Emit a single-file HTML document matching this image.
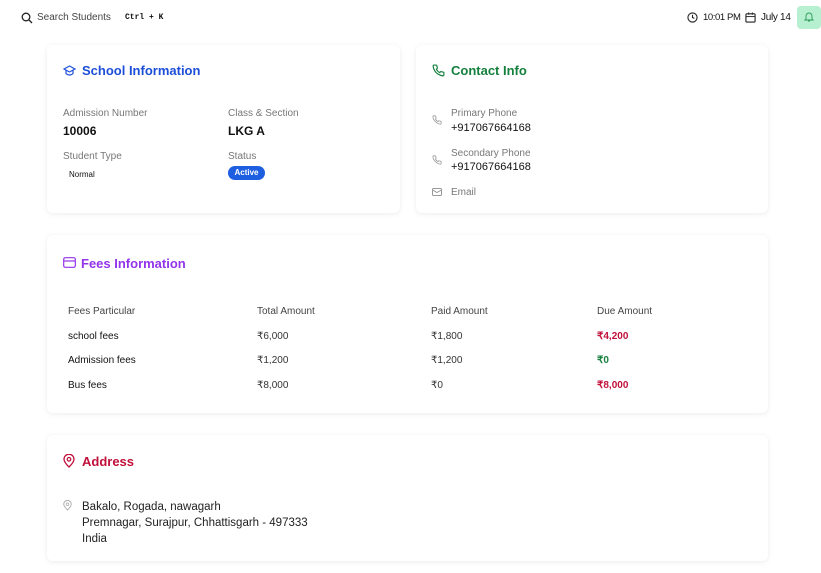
<!DOCTYPE html>
<html><head><style>
*{margin:0;padding:0;box-sizing:border-box}
body{width:821px;height:573px;background:#fff;font-family:"Liberation Sans",sans-serif;position:relative;overflow:hidden;color:#111}
.a{position:absolute;white-space:nowrap}
.card{position:absolute;background:#fff;border-radius:6px;box-shadow:0 1px 6px rgba(0,0,0,0.08)}
.t{font-size:13px;font-weight:bold}
.l{font-size:10px;color:#777}
.v{font-size:12px;color:#111}
.s{font-size:10px;color:#111}
svg{position:absolute}
</style></head><body>
<svg style="left:21px;top:12px" width="12" height="12" viewBox="0 0 12 12"><circle cx="5" cy="5" r="3.8" fill="none" stroke="#222" stroke-width="1.3"/><line x1="8" y1="8" x2="11" y2="11" stroke="#222" stroke-width="1.3"/></svg>
<div class="a" style="left:37px;top:12px;font-size:10px;color:#444">Search Students</div>
<div class="a" style="left:125px;top:13px;font-size:8px;font-family:'Liberation Mono',monospace;font-weight:bold">Ctrl + K</div>
<svg style="left:687px;top:12px" width="11" height="11" viewBox="0 0 12 12"><circle cx="6" cy="6" r="5" fill="none" stroke="#222" stroke-width="1.2"/><path d="M6 3v3l2 1" fill="none" stroke="#222" stroke-width="1.2"/></svg>
<div class="a" style="left:703px;top:12px;font-size:9.5px;letter-spacing:-0.4px">10:01 PM</div>
<svg style="left:745px;top:12px" width="11" height="11" viewBox="0 0 12 12"><rect x="1" y="2" width="10" height="9" rx="1" fill="none" stroke="#222" stroke-width="1.2"/><line x1="1" y1="5" x2="11" y2="5" stroke="#222"/><line x1="4" y1="0.5" x2="4" y2="3" stroke="#222"/><line x1="8" y1="0.5" x2="8" y2="3" stroke="#222"/></svg>
<div class="a" style="left:761px;top:12px;font-size:10px;letter-spacing:-0.3px;color:#111">July 14</div>
<div class="a" style="left:797px;top:6px;width:24px;height:23px;background:#b7f0d0;border-radius:4px"></div>
<svg style="left:804px;top:12px" width="10" height="10" viewBox="0 0 10 10"><path d="M2 7V4a3 3 0 0 1 6 0v3l1 1H1z M4 9h2" fill="none" stroke="#2a9a5a" stroke-width="0.9"/></svg>

<div class="card" style="left:47px;top:45px;width:353px;height:168px"></div>
<div class="card" style="left:416px;top:45px;width:352px;height:168px"></div>
<div class="card" style="left:47px;top:235px;width:721px;height:178px"></div>
<div class="card" style="left:47px;top:435px;width:721px;height:126px"></div>

<svg style="left:63px;top:65px" width="13" height="11" viewBox="0 0 13 11"><path d="M6.5 1L12 4 6.5 7 1 4z M3 5.5v3c2 2 5 2 7 0v-3" fill="none" stroke="#1d4ed8" stroke-width="1.2"/></svg>
<div class="a t" style="left:82px;top:63px;color:#1d4ed8">School Information</div>
<div class="a l" style="left:63px;top:108px">Admission Number</div>
<div class="a v" style="left:63px;top:124px;font-weight:bold">10006</div>
<div class="a l" style="left:228px;top:108px">Class &amp; Section</div>
<div class="a v" style="left:228px;top:124px;font-weight:bold">LKG A</div>
<div class="a l" style="left:63px;top:151px">Student Type</div>
<div class="a" style="left:69px;top:170px;font-size:8px">Normal</div>
<div class="a l" style="left:228px;top:151px">Status</div>
<div class="a" style="left:228px;top:166px;width:37px;height:14px;background:#1d5fe0;border-radius:7px;color:#fff;font-size:8px;font-weight:bold;text-align:center;line-height:14px">Active</div>

<svg style="left:432px;top:64px" width="13" height="13" viewBox="0 0 24 24"><path d="M22 16.9v3a2 2 0 0 1-2.2 2 19.8 19.8 0 0 1-8.6-3.1 19.5 19.5 0 0 1-6-6A19.8 19.8 0 0 1 2.1 4.2 2 2 0 0 1 4.1 2h3a2 2 0 0 1 2 1.7c.1 1 .4 1.900.7 2.8a2 2 0 0 1-.5 2.1L8.1 9.9a16 16 0 0 0 6 6l1.3-1.3a2 2 0 0 1 2.1-.4c.9.3 1.8.6 2.8.7a2 2 0 0 1 1.7 2z" fill="none" stroke="#15803d" stroke-width="2.2"/></svg>
<div class="a t" style="left:451px;top:63px;color:#15803d">Contact Info</div>
<svg style="left:432px;top:115px" width="10" height="10" viewBox="0 0 24 24"><path d="M22 16.9v3a2 2 0 0 1-2.2 2 19.8 19.8 0 0 1-8.6-3.1 19.5 19.5 0 0 1-6-6A19.8 19.8 0 0 1 2.1 4.2 2 2 0 0 1 4.1 2h3a2 2 0 0 1 2 1.7c.1 1 .4 1.9.7 2.8a2 2 0 0 1-.5 2.1L8.1 9.9a16 16 0 0 0 6 6l1.3-1.3a2 2 0 0 1 2.1-.4c.9.3 1.8.6 2.8.7a2 2 0 0 1 1.7 2z" fill="none" stroke="#999" stroke-width="2"/></svg>
<div class="a l" style="left:451px;top:108px">Primary Phone</div>
<div class="a v" style="left:451px;top:122px;font-size:11px">+917067664168</div>
<svg style="left:432px;top:155px" width="10" height="10" viewBox="0 0 24 24"><path d="M22 16.9v3a2 2 0 0 1-2.2 2 19.8 19.8 0 0 1-8.6-3.1 19.5 19.5 0 0 1-6-6A19.8 19.8 0 0 1 2.1 4.2 2 2 0 0 1 4.1 2h3a2 2 0 0 1 2 1.7c.1 1 .4 1.9.7 2.8a2 2 0 0 1-.5 2.1L8.1 9.9a16 16 0 0 0 6 6l1.3-1.3a2 2 0 0 1 2.1-.4c.9.3 1.8.6 2.8.7a2 2 0 0 1 1.7 2z" fill="none" stroke="#999" stroke-width="2"/></svg>
<div class="a l" style="left:451px;top:148px">Secondary Phone</div>
<div class="a v" style="left:451px;top:161px;font-size:11px">+917067664168</div>
<svg style="left:432px;top:188px" width="10" height="8" viewBox="0 0 10 8"><rect x="0.5" y="0.5" width="9" height="7" rx="1" fill="none" stroke="#999"/><path d="M0.5 2l4.5 2.5L9.5 2" fill="none" stroke="#999"/></svg>
<div class="a l" style="left:451px;top:187px">Email</div>

<svg style="left:63px;top:257px" width="13" height="11" viewBox="0 0 13 11"><rect x="0.7" y="0.7" width="11.6" height="9.6" rx="1.5" fill="none" stroke="#9333ea" stroke-width="1.2"/><line x1="0.7" y1="4" x2="12.3" y2="4" stroke="#9333ea" stroke-width="1.2"/></svg>
<div class="a t" style="left:81px;top:256px;color:#9333ea">Fees Information</div>
<div class="a l" style="left:68px;top:306px;color:#444">Fees Particular</div>
<div class="a l" style="left:257px;top:306px;color:#444">Total Amount</div>
<div class="a l" style="left:431px;top:306px;color:#444">Paid Amount</div>
<div class="a l" style="left:597px;top:306px;color:#444">Due Amount</div>
<div class="a s" style="left:68px;top:331px">school fees</div>
<div class="a s" style="left:257px;top:331px;color:#333">₹6,000</div>
<div class="a s" style="left:431px;top:331px;color:#333">₹1,800</div>
<div class="a s" style="left:597px;top:331px;color:#c0103a;font-weight:bold">₹4,200</div>
<div class="a s" style="left:68px;top:355px">Admission fees</div>
<div class="a s" style="left:257px;top:355px;color:#333">₹1,200</div>
<div class="a s" style="left:431px;top:355px;color:#333">₹1,200</div>
<div class="a s" style="left:597px;top:355px;color:#15803d;font-weight:bold">₹0</div>
<div class="a s" style="left:68px;top:380px">Bus fees</div>
<div class="a s" style="left:257px;top:380px;color:#333">₹8,000</div>
<div class="a s" style="left:431px;top:380px;color:#333">₹0</div>
<div class="a s" style="left:597px;top:380px;color:#c0103a;font-weight:bold">₹8,000</div>

<svg style="left:63px;top:454px" width="12" height="14" viewBox="0 0 12 14"><path d="M6 13C3 10 1 7.5 1 5.2a5 5 0 0 1 10 0C11 7.5 9 10 6 13z" fill="none" stroke="#c0103a" stroke-width="1.3"/><circle cx="6" cy="5.3" r="1.8" fill="none" stroke="#c0103a" stroke-width="1.2"/></svg>
<div class="a t" style="left:82px;top:454px;color:#c0103a">Address</div>
<svg style="left:63px;top:500px" width="9" height="11" viewBox="0 0 12 14"><path d="M6 13C3 10 1 7.5 1 5.2a5 5 0 0 1 10 0C11 7.5 9 10 6 13z" fill="none" stroke="#aaa" stroke-width="1.2"/><circle cx="6" cy="5.3" r="1.8" fill="none" stroke="#aaa"/></svg>
<div class="a" style="left:82px;top:499px;font-size:11.5px;color:#222;line-height:16px">Bakalo, Rogada, nawagarh<br>Premnagar, Surajpur, Chhattisgarh - 497333<br>India</div>
</body></html>
